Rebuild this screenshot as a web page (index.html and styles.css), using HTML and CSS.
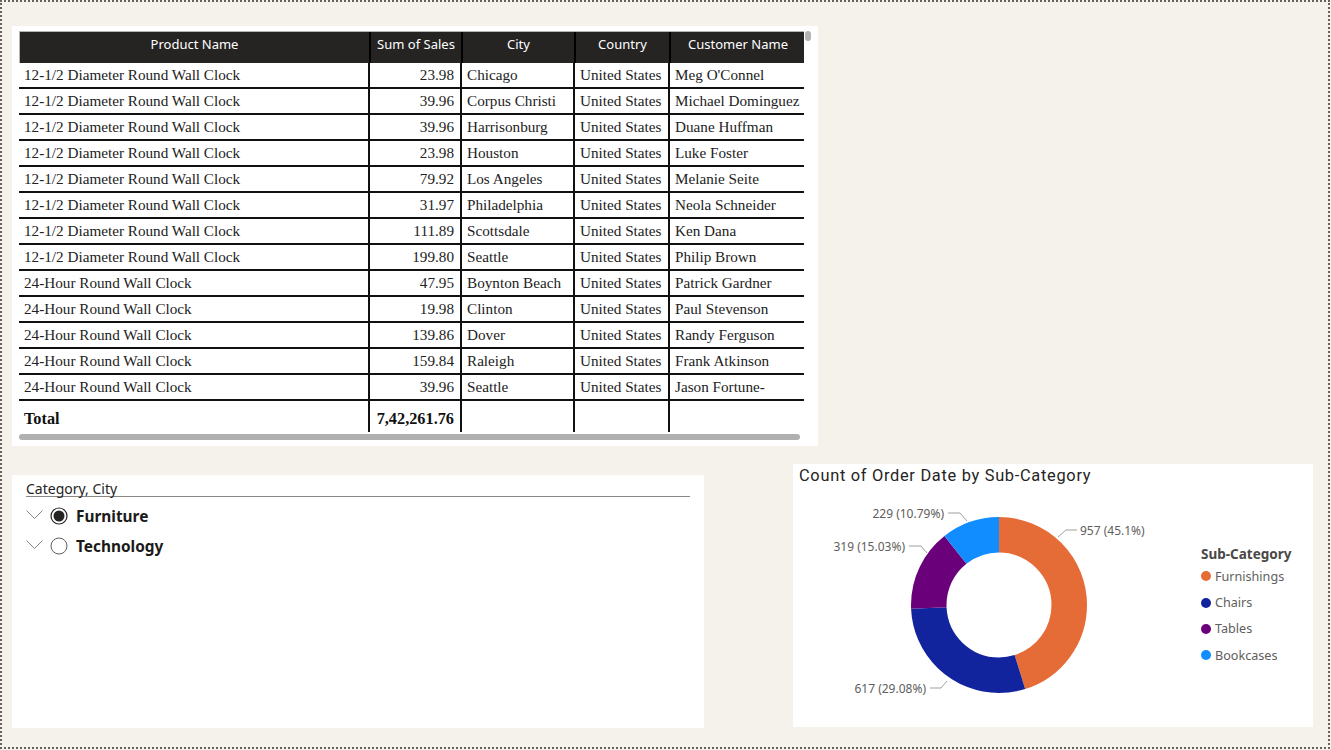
FILE: index.html
```html
<!DOCTYPE html>
<html>
<head>
<meta charset="utf-8">
<link rel="stylesheet" href="styles.css">
</head>
<body>
<div class="canvas">
  <section class="card table-card">
    <div class="grid-table">
      <div class="trow head">
        <div class="cell">Product Name</div>
        <div class="cell">Sum of Sales</div>
        <div class="cell">City</div>
        <div class="cell">Country</div>
        <div class="cell">Customer Name</div>
      </div>
      <div class="tbody">
        <div class="trow"><div class="cell">12-1/2 Diameter Round Wall Clock</div><div class="cell num">23.98</div><div class="cell">Chicago</div><div class="cell">United States</div><div class="cell">Meg O'Connel</div></div>
        <div class="trow"><div class="cell">12-1/2 Diameter Round Wall Clock</div><div class="cell num">39.96</div><div class="cell">Corpus Christi</div><div class="cell">United States</div><div class="cell">Michael Dominguez</div></div>
        <div class="trow"><div class="cell">12-1/2 Diameter Round Wall Clock</div><div class="cell num">39.96</div><div class="cell">Harrisonburg</div><div class="cell">United States</div><div class="cell">Duane Huffman</div></div>
        <div class="trow"><div class="cell">12-1/2 Diameter Round Wall Clock</div><div class="cell num">23.98</div><div class="cell">Houston</div><div class="cell">United States</div><div class="cell">Luke Foster</div></div>
        <div class="trow"><div class="cell">12-1/2 Diameter Round Wall Clock</div><div class="cell num">79.92</div><div class="cell">Los Angeles</div><div class="cell">United States</div><div class="cell">Melanie Seite</div></div>
        <div class="trow"><div class="cell">12-1/2 Diameter Round Wall Clock</div><div class="cell num">31.97</div><div class="cell">Philadelphia</div><div class="cell">United States</div><div class="cell">Neola Schneider</div></div>
        <div class="trow"><div class="cell">12-1/2 Diameter Round Wall Clock</div><div class="cell num">111.89</div><div class="cell">Scottsdale</div><div class="cell">United States</div><div class="cell">Ken Dana</div></div>
        <div class="trow"><div class="cell">12-1/2 Diameter Round Wall Clock</div><div class="cell num">199.80</div><div class="cell">Seattle</div><div class="cell">United States</div><div class="cell">Philip Brown</div></div>
        <div class="trow"><div class="cell">24-Hour Round Wall Clock</div><div class="cell num">47.95</div><div class="cell">Boynton Beach</div><div class="cell">United States</div><div class="cell">Patrick Gardner</div></div>
        <div class="trow"><div class="cell">24-Hour Round Wall Clock</div><div class="cell num">19.98</div><div class="cell">Clinton</div><div class="cell">United States</div><div class="cell">Paul Stevenson</div></div>
        <div class="trow"><div class="cell">24-Hour Round Wall Clock</div><div class="cell num">139.86</div><div class="cell">Dover</div><div class="cell">United States</div><div class="cell">Randy Ferguson</div></div>
        <div class="trow"><div class="cell">24-Hour Round Wall Clock</div><div class="cell num">159.84</div><div class="cell">Raleigh</div><div class="cell">United States</div><div class="cell">Frank Atkinson</div></div>
        <div class="trow"><div class="cell">24-Hour Round Wall Clock</div><div class="cell num">39.96</div><div class="cell">Seattle</div><div class="cell">United States</div><div class="cell">Jason Fortune-</div></div>
      </div>
      <div class="trow total">
        <div class="cell">Total</div>
        <div class="cell num">7,42,261.76</div>
        <div class="cell"></div>
        <div class="cell"></div>
        <div class="cell"></div>
      </div>
    </div>
    <div class="hscroll"></div>
    <div class="vthumb"></div>
  </section>

  <section class="card slicer-card">
    <div class="slicer-head">Category, City</div>
    <div class="slicer-item">
      <svg class="chev" width="17" height="10" viewBox="0 0 17 10"><path d="M0.5 0.5 L8.5 8.5 L16.5 0.5" fill="none" stroke="#8a8886" stroke-width="1"/></svg>
      <svg class="radio" width="18" height="18" viewBox="0 0 18 18"><circle cx="9" cy="9" r="8" fill="none" stroke="#252423" stroke-width="1.2"/><circle cx="9" cy="9" r="5.5" fill="#252423"/></svg>
      <span class="item-label">Furniture</span>
    </div>
    <div class="slicer-item">
      <svg class="chev" width="17" height="10" viewBox="0 0 17 10"><path d="M0.5 0.5 L8.5 8.5 L16.5 0.5" fill="none" stroke="#8a8886" stroke-width="1"/></svg>
      <svg class="radio" width="18" height="18" viewBox="0 0 18 18"><circle cx="9" cy="9" r="8" fill="none" stroke="#605e5c" stroke-width="1"/></svg>
      <span class="item-label">Technology</span>
    </div>
  </section>

  <section class="card donut-card">
    <div class="donut-title">Count of Order Date by Sub-Category</div>
    <div class="donut-body">
      <svg class="donut" width="400" height="239" viewBox="0 0 400 239">
        <g transform="rotate(-90 206 117)">
          <circle cx="206" cy="117" r="70.25" fill="none" stroke="#E66C37" stroke-width="35.5" stroke-dasharray="199.07 441.39" stroke-dashoffset="0"/>
          <circle cx="206" cy="117" r="70.25" fill="none" stroke="#12239E" stroke-width="35.5" stroke-dasharray="128.36 441.39" stroke-dashoffset="-199.07"/>
          <circle cx="206" cy="117" r="70.25" fill="none" stroke="#6B007B" stroke-width="35.5" stroke-dasharray="66.34 441.39" stroke-dashoffset="-327.43"/>
          <circle cx="206" cy="117" r="70.25" fill="none" stroke="#118DFF" stroke-width="35.5" stroke-dasharray="47.62 441.39" stroke-dashoffset="-393.77"/>
        </g>
        <g fill="none" stroke="#a19f9d" stroke-width="1">
          <polyline points="265,49 273,42 284,42"/>
          <polyline points="155,25 167,25 174,33"/>
          <polyline points="116,58 128,58 134,65"/>
          <polyline points="137,200 148,200 154,193"/>
        </g>
        <g class="dlabel">
          <text x="287" y="47">957 (45.1%)</text>
          <text x="151" y="30" text-anchor="end">229 (10.79%)</text>
          <text x="112" y="63" text-anchor="end">319 (15.03%)</text>
          <text x="133" y="205" text-anchor="end">617 (29.08%)</text>
        </g>
      </svg>
      <div class="legend">
        <div class="legend-title">Sub-Category</div>
        <div class="legend-item"><span class="dot furn"></span>Furnishings</div>
        <div class="legend-item"><span class="dot chairs"></span>Chairs</div>
        <div class="legend-item"><span class="dot tables"></span>Tables</div>
        <div class="legend-item"><span class="dot books"></span>Bookcases</div>
      </div>
    </div>
  </section>
</div>
</body>
</html>
```

FILE: styles.css
```css
* { box-sizing: border-box; }
html, body { margin: 0; padding: 0; }
body {
  background: #f5f1eb;
  width: 1331px;
  height: 750px;
  overflow: hidden;
}
.canvas {
  width: 1330px;
  height: 749px;
  border: 2px dotted #66625e;
  background: #f5f1eb;
  padding: 24px 0 0 10px;
  display: grid;
  grid-template-columns: 692px 89px 25px 495px;
  grid-template-rows: 420px 18px 11px 252px 1px;
}
.card { background: #fff; position: relative; }

/* Table */
.table-card {
  grid-column: 1 / 4;
  grid-row: 1 / 2;
  padding: 5px 14px 6px 7px;
  display: flex;
  flex-direction: column;
}
.grid-table { width: 785px; }
.trow {
  display: grid;
  grid-template-columns: 351px 92px 113px 95px 134px;
  height: 26px;
  border-bottom: 2px solid #111;
  font-family: "Liberation Serif", "Times New Roman", serif;
  font-size: 15.2px;
  color: #222;
}
.cell {
  padding: 0 5px;
  border-right: 2px solid #111;
  white-space: nowrap;
  overflow: hidden;
  line-height: 24px;
}
.cell:last-child { border-right: none; padding-right: 0; }
.cell.num { text-align: right; padding-right: 6px; }
.trow.head {
  height: 32px;
  background: #252423;
  border: none;
  border-top: 1px solid #b5b5b5;
  border-left: 1px solid #b5b5b5;
  font-family: "Noto Sans", "Open Sans", sans-serif;
  font-size: 13px;
  color: #fff;
}
.trow.head .cell {
  text-align: center;
  line-height: 24px;
  border-right-color: #000;
  padding: 0 4px;
}
.trow.head .cell:last-child { padding-right: 4px; }
.trow.total {
  height: 31px;
  border-bottom: none;
  font-weight: bold;
  font-size: 16.3px;
  color: #111;
}
.trow.total .cell { line-height: 36px; }
.hscroll {
  margin-top: 2px;
  width: 781px;
  height: 6px;
  border-radius: 3px;
  background: #b0b0b0;
}
.vthumb {
  position: absolute;
  left: 793px;
  top: 5px;
  width: 6px;
  height: 10px;
  border-radius: 3px;
  background: #b3b3b3;
}

/* Slicer */
.slicer-card {
  grid-column: 1 / 2;
  grid-row: 4 / 6;
  padding: 6px 14px 0 14px;
  font-family: "Noto Sans", "Open Sans", sans-serif;
  color: #252423;
}
.slicer-head {
  font-size: 14px;
  line-height: 16px;
  height: 16px;
  border-bottom: 1px solid #8a8886;
  margin-bottom: 4px;
}
.slicer-item {
  display: flex;
  align-items: center;
  height: 30px;
}
.chev { margin-right: 7px; margin-top: -2px; }
.radio { margin-right: 8px; }
.item-label {
  font-size: 15.4px;
  font-weight: bold;
  color: #1b1a19;
}

/* Donut */
.donut-card {
  grid-column: 3 / 5;
  grid-row: 3 / 5;
  font-family: "Noto Sans", "Open Sans", sans-serif;
}
.donut-title {
  height: 24px;
  padding: 1px 0 0 6px;
  line-height: 22px;
  font-family: "Roboto", "DejaVu Sans", sans-serif;
  font-size: 16.4px;
  letter-spacing: 0.7px;
  color: #252423;
}
.donut-body { display: flex; }
.donut { display: block; }
.dlabel text {
  font-family: "Noto Sans", "Open Sans", sans-serif;
  font-size: 12px;
  fill: #605e5c;
}
.legend {
  margin-left: 8px;
  padding-top: 56px;
}
.legend-title {
  font-size: 13.5px;
  font-weight: bold;
  color: #4a4846;
  line-height: 20px;
  height: 20px;
}
.legend-item {
  display: flex;
  align-items: center;
  height: 26.4px;
  font-size: 12.6px;
  color: #605e5c;
}
.legend-title + .legend-item { margin-top: -1px; }
.dot {
  width: 10px;
  height: 10px;
  border-radius: 50%;
  margin-right: 4px;
  flex: none;
}
.dot.furn { background: #E66C37; }
.dot.chairs { background: #12239E; }
.dot.tables { background: #6B007B; }
.dot.books { background: #118DFF; }
```
